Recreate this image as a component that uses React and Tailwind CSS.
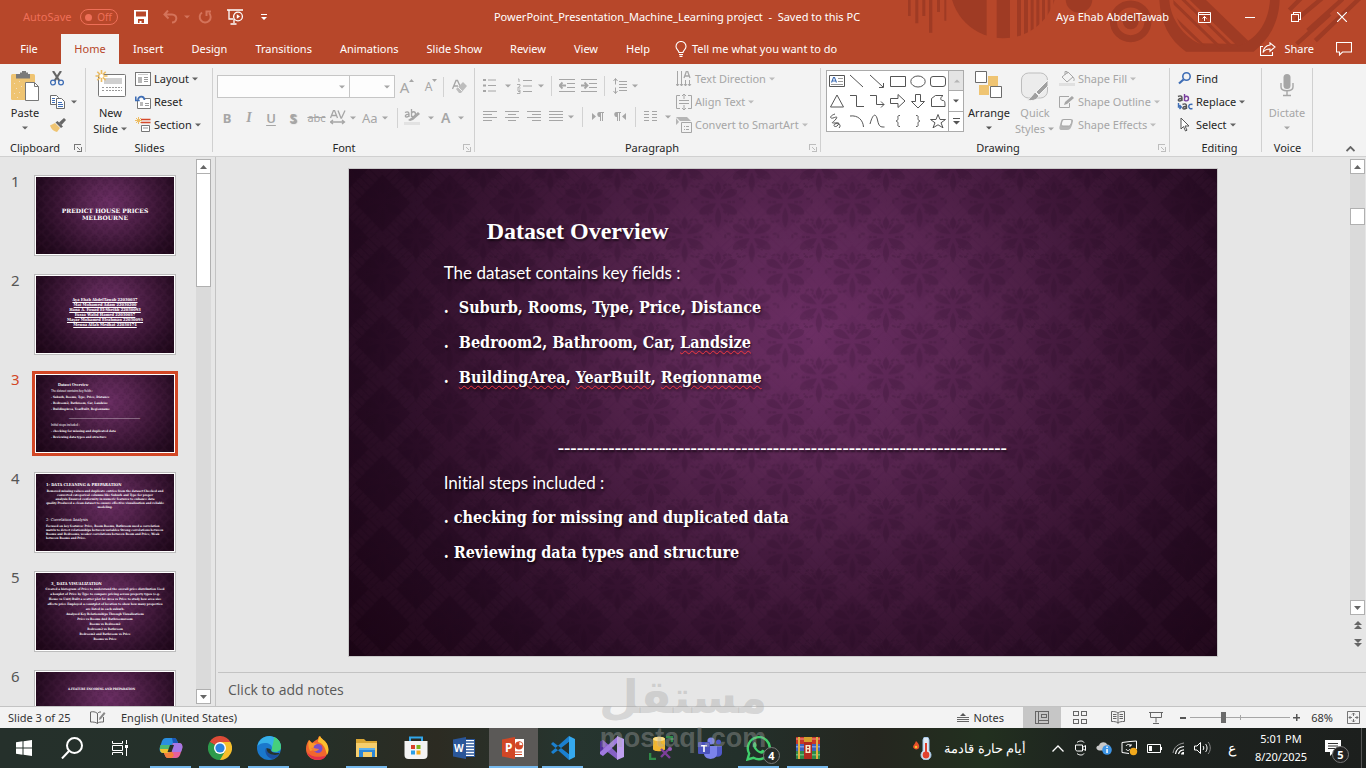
import React, { useId, useState } from "react";
import clsx from "clsx";

/* ---------- small helpers ---------- */

function Svg({ w, h, children, className, ...rest }) {
  return (
    <svg
      width={w}
      height={h}
      viewBox={`0 0 ${w} ${h}`}
      fill="none"
      stroke="currentColor"
      aria-hidden="true"
      className={clsx("shrink-0", className)}
      {...rest}
    >
      {children}
    </svg>
  );
}

function Caret({ className }) {
  return (
    <Svg w={7} h={4} className={className} stroke="none">
      <path d="M0 0.5h6L3 3.5z" fill="currentColor" />
    </Svg>
  );
}

function Sep({ className }) {
  return <span className={clsx("w-px h-5 bg-[#d2d2d2] shrink-0", className)} />;
}

function Launcher() {
  return (
    <Svg w={8} h={8} shapeRendering="crispEdges">
      <path d="M0.5 6V0.5H7M3 3l3 3M7.5 3v4.5H3" />
    </Svg>
  );
}

/* ---------- title bar ---------- */

function HeaderArt() {
  return (
    <svg
      width="460"
      height="52"
      viewBox="0 0 1380 156"
      className="absolute right-0 top-0 pointer-events-none"
      aria-hidden="true"
      fill="#9f3b24"
    >
      <defs>
        <clipPath id="stripeDisc"><circle cx="292" cy="-45" r="160" /></clipPath>
        <clipPath id="ringDisc"><circle cx="948" cy="0" r="146" /></clipPath>
      </defs>
      <path d="M6 0h8v48H6zM28 0h9v70h-9zM49 0h9v48h-9zM69 0h10v98H69zM93 0h9v36h-9zM115 0h6v62h-6z" />
      <g clipPath="url(#stripeDisc)">
        <path d="M130 0h112v160H130zM272 0h40v160h-40zM333 0h12v160h-12zM354 0h12v160h-12zM374 0h9v160h-9zM391 0h9v160h-9zM408 0h9v160h-9zM425 0h8v160h-8zM442 0h7v160h-7z" />
      </g>
      <circle cx="519" cy="-2" r="40" />
      <circle cx="674" cy="64" r="52" fill="none" stroke="#9f3b24" strokeWidth="21" />
      <circle cx="674" cy="64" r="24" />
      <path d="M760 0h30c4 60 44 108 88 130l130 2c50-20 80-70 84-132h29c-2 66-32 120-78 155H840C790 120 764 70 760 0z" />
      <g clipPath="url(#ringDisc)" stroke="#9f3b24" fill="none">
        <path d="M855-20l165 160" strokeWidth="34" />
        <path d="M812-20l165 160M785-10l165 160M770 20l140 135" strokeWidth="9" />
      </g>
      <g stroke="#9f3b24" fill="none" strokeWidth="13">
        <path d="M1150 30l40-40M1170 60l90-75M1205 92l105-95M1228 122l136-130M1172 132l100-90" />
      </g>
    </svg>
  );
}

function TitleBar() {
  return (
    <div className="relative flex items-center h-[34px] text-white">
      <div className="flex items-center w-[298px] pl-[23px] shrink-0">
        <label htmlFor="autosave" className="text-[#ee6f58] w-[57px] whitespace-nowrap">AutoSave</label>
        <button id="autosave" className="flex items-center justify-between w-[38px] h-[16px] rounded-full border border-[#ee6f58] text-[#ee6f58] pl-[4px] pr-[5px] text-[10px] leading-3">
          <span className="w-[7px] h-[7px] rounded-full bg-[#ee6f58]" />
          Off
        </button>
        <button aria-label="Save" className="ml-4">
          <Svg w={14} h={14} stroke="none">
            <path fillRule="evenodd" fill="#fff" d="M0 0h14v14H0zM2 1.500v5h10v-5zM4 9v4h1.500v-2h2v2H10V9z" />
          </Svg>
        </button>
        <button aria-label="Undo" className="ml-[15px] flex items-center gap-[6px] text-[#d4735a]">
          <Svg w={15} h={14} strokeWidth="2">
            <path d="M5 0.500L1.500 4.500 5.500 8.500M2 4.500h7c6 0 5.500 8 0 8" />
          </Svg>
          <Caret />
        </button>
        <button aria-label="Redo" className="ml-[7px] text-[#d4735a]">
          <Svg w={15} h={14} strokeWidth="2">
            <path d="M4 2.500a5.500 5.500 0 1 0 7 0.500M8.500 6V1.500H13" />
          </Svg>
        </button>
        <button aria-label="Start From Beginning" className="ml-[14px]">
          <Svg w={17} h={16} stroke="#fff" strokeWidth="1.3">
            <path d="M0 1h16M2 1v9h4M7 10v4M3.500 15h6" />
            <circle cx="11" cy="7.500" r="4.400" />
            <path d="M9.800 5.300v4.400l3.200-2.200z" fill="#fff" stroke="none" />
          </Svg>
        </button>
        <button aria-label="Customize Quick Access Toolbar" className="ml-[17px]">
          <Svg w={6} h={7} stroke="none">
            <path d="M0 0h6v1H0zM0 3h6L3 6z" fill="#fff" />
          </Svg>
        </button>
      </div>
      <h1 className="flex-1 text-center whitespace-pre">PowerPoint_Presentation_Machine_Learning project  -  Saved to this PC</h1>
      <div className="flex items-center w-[310px] shrink-0">
        <span className="w-[142px] whitespace-nowrap">Aya Ehab AbdelTawab</span>
        <button aria-label="Ribbon Display Options" className="mr-[34px]">
          <Svg w={13} h={11} stroke="#fff">
            <path d="M0.500 0.500h12v10H0.500zM0.500 2.500h12M6.500 9V4.500M4.500 6.500l2-2 2 2" />
          </Svg>
        </button>
        <button aria-label="Minimize" className="mr-[36px]">
          <Svg w={10} h={1} stroke="none"><path d="M0 0h10v1H0z" fill="#fff" /></Svg>
        </button>
        <button aria-label="Restore" className="mr-[36px]">
          <Svg w={10} h={10} stroke="#fff" shapeRendering="crispEdges">
            <path d="M0.500 2.500h7v7h-7zM2.500 2V0.500h7v7H8" />
          </Svg>
        </button>
        <button aria-label="Close">
          <Svg w={10} h={10} stroke="#fff" strokeWidth="1.2"><path d="M0 0l10 10M10 0L0 10" /></Svg>
        </button>
      </div>
    </div>
  );
}

const tabs = ["Insert", "Design", "Transitions", "Animations", "Slide Show", "Review", "View", "Help"];

function TabRow() {
  return (
    <nav className="relative flex items-stretch h-[30px] text-white">
      <button className="w-[61px] pr-[3px]">File</button>
      <button className="w-[58px] bg-[#f3f3f3] text-[#b7472a]">Home</button>
      {tabs.map((t) => (
        <button key={t} className="px-[14px] whitespace-nowrap">{t}</button>
      ))}
      <button className="flex items-center gap-[5px] pl-[11px] whitespace-nowrap">
        <Svg w={12} h={16} stroke="#fff" strokeWidth="1.1">
          <path d="M4 11.500c0-2-3-3-3-6a5 5 0 0 1 10 0c0 3-3 4-3 6zM4 13.500h4M4.500 15.400h3" />
        </Svg>
        Tell me what you want to do
      </button>
      <button className="flex items-center gap-2 ml-auto">
        <Svg w={16} h={14} stroke="#fff" strokeWidth="1.100">
          <path d="M3 4.500H0.500v9h12V10" />
          <path d="M10 0.800l5 4.200-5 4.200V7C6.500 7 4.500 8 3 10.500 3.500 6 6.500 3.500 10 3z" />
        </Svg>
        Share
      </button>
      <button aria-label="Comments" className="ml-[22px] mr-[14px]">
        <Svg w={16} h={14} stroke="#fff" strokeWidth="1.100">
          <path d="M0.500 0.500h15v9.500H6.500L3.500 13v-3h-3z" />
        </Svg>
      </button>
    </nav>
  );
}

/* ---------- ribbon ---------- */

function Group({ label, launcher, dim, className, children }) {
  return (
    <section className={clsx("flex flex-col shrink-0 pt-[3px] relative", className)}>
      <div className="flex h-[73px]">{children}</div>
      <div className="text-center leading-4 text-[#262626]">{label}</div>
      {launcher && (
        <button aria-label={`${label} settings`} className={clsx("absolute right-[4px] bottom-[4px]", dim ? "text-[#bdbdbd]" : "text-[#777]")}>
          <Launcher />
        </button>
      )}
      <span className="absolute right-0 top-1 bottom-1 w-px bg-[#d0d0d0]" />
    </section>
  );
}

function Row({ icon, label, caret = true, gap = "gap-[3px]" }) {
  return (
    <button className={clsx("flex items-center h-[23px] whitespace-nowrap", gap)}>
      <span className="w-4 flex justify-center">{icon}</span>
      {label}
      {caret && <Caret className="opacity-70" />}
    </button>
  );
}

function ClipboardGroup() {
  return (
    <Group label="Clipboard" launcher className="w-[86px] pr-4">
      <button className="w-[50px] shrink-0 flex flex-col items-center pt-1">
        <Svg w={28} h={31} stroke="none">
          <rect x="0" y="3" width="24" height="26" rx="1.500" fill="#efc472" />
          <path d="M5 3h4V1.500h2V0h4v1.500h2V3h2v4.500H5z" fill="#7a7a7a" />
          <path d="M3 12h1v1H3zM8 10h1v1H8zM5 17h1v1H5zM10 15h1v1h-1zM3 22h1v1H3zM8 21h1v1H8zM6 26h1v1H6z" fill="#f4dfc0" />
          <path d="M14.500 11.500h9l4 4v14h-13z" fill="#fff" stroke="#777" />
          <path d="M23.500 11.500v4h4" stroke="#777" fill="none" />
        </Svg>
        <span className="leading-4 mt-[3px]">Paste</span>
        <Caret className="mt-[5px] text-[#666]" />
      </button>
      <div className="flex flex-col">
        <button aria-label="Cut" className="h-[23px] flex items-center">
          <Svg w={14} h={15}>
            <path d="M3 0l6.500 10M11 0L4.500 10" stroke="#666" strokeWidth="2.200" />
            <circle cx="3" cy="11.500" r="2.400" stroke="#3e6db5" strokeWidth="1.300" />
            <circle cx="11" cy="11.500" r="2.400" stroke="#3e6db5" strokeWidth="1.300" />
          </Svg>
        </button>
        <button aria-label="Copy" className="h-[23px] flex items-center gap-[6px] text-[#666]">
          <Svg w={15} h={14} stroke="#6b6b6b">
            <path d="M0.500 0.500h6l2 2v7h-8z" fill="#fff" />
            <path d="M6.500 3.500h5l3 3v7h-8z" fill="#fff" />
            <path d="M2 3.500h3M2 5.500h3M2 7.500h3M8 7.500h4M8 9.500h5M8 11.500h5" stroke="#3e6db5" />
          </Svg>
          <Caret />
        </button>
        <button aria-label="Format Painter" className="h-[23px] flex items-center">
          <Svg w={16} h={14} stroke="none">
            <path d="M0 7.500l5-2.500 5 5-3 4c-3-0.500-6-3-7-6.500z" fill="#efc472" />
            <path d="M5.500 4.500l2-1.500 5.500 5.500-2 1.500z" fill="#666" />
            <path d="M9 4.500L14 0l2 2-4.500 5z" fill="#666" />
          </Svg>
        </button>
      </div>
    </Group>
  );
}

function SlidesGroup() {
  return (
    <Group label="Slides" className="w-[127px]">
      <button className="w-[49px] flex flex-col items-center pt-[3px]">
        <Svg w={31} h={28}>
          <rect x="3.500" y="4.500" width="27" height="22" rx="1" fill="#fff" stroke="#777" />
          <path d="M9 8h18v6H9z" fill="#d0d0d0" stroke="none" />
          <path d="M7 17.500h2M7 20.500h2M11 17.500h16M11 20.500h16" stroke="#999" strokeDasharray="2 1" />
          <path d="M6.500 0v12M0.500 6h12M2.300 1.800l8.400 8.400M10.700 1.800l-8.400 8.400" stroke="#edbd62" strokeWidth="1.600" />
          <circle cx="6.500" cy="6" r="2" fill="#fff" stroke="none" />
        </Svg>
        <span className="leading-4 mt-[7px]">New</span>
        <span className="leading-4 flex items-center gap-[3px]">Slide <Caret className="text-[#666]" /></span>
      </button>
      <div className="flex flex-col">
        <Row label="Layout" icon={
          <Svg w={16} h={14} stroke="#777" shapeRendering="crispEdges">
            <path d="M0.500 0.500h15v13H0.500z" fill="#fff" />
            <path d="M3 2.500h10" stroke="#c9c9c9" />
            <path d="M3 5h4v6H3z" fill="#b9b9b9" stroke="none" />
            <path d="M9 5.500h4M9 7.500h4M9 9.500h4" stroke="#999" />
          </Svg>
        } />
        <Row label="Reset" caret={false} icon={
          <Svg w={16} h={14} stroke="#777">
            <path d="M2.500 4.500v9h13V3.500H9" fill="#fff" />
            <path d="M5 7h3v4H5z" fill="#b9b9b9" stroke="none" />
            <path d="M10 8.500h4M10 10.500h4" stroke="#999" />
            <path d="M9.500 5C9 0.500 4 0.500 3 4.500M0.700 1.500v4h4" stroke="#3e6db5" strokeWidth="1.700" />
          </Svg>
        } />
        <Row label="Section" icon={
          <Svg w={16} h={15} stroke="#777">
            <path d="M6 2.500h9.500M6 5.500h9.500" stroke="#d5492b" strokeWidth="1.400" />
            <path d="M6.500 8.500h8v6h-8z" fill="#fff" />
            <path d="M8 10h5v2H8z" fill="#c9c9c9" stroke="none" />
            <path d="M3.500 0v7M0 3.500h7M1 1l5 5M6 1L1 6" stroke="#edbd62" />
          </Svg>
        } />
      </div>
    </Group>
  );
}

function FontGroup() {
  return (
    <Group label="Font" launcher dim className="w-[262px] px-1 text-[#a6a6a6]">
      <div className="flex flex-col pt-2">
        <div className="flex items-center h-[23px]">
          <div className="relative">
            <select aria-label="Font name" className="appearance-none block w-[133px] h-[23px] bg-[#fdfdfd] border border-[#c6c6c6]"><option></option></select>
            <Caret className="absolute right-1 top-[10px]" />
          </div>
          <div className="relative -ml-px">
            <select aria-label="Font size" className="appearance-none block w-[46px] h-[23px] bg-[#fdfdfd] border border-[#c6c6c6]"><option></option></select>
            <Caret className="absolute right-1 top-[10px]" />
          </div>
          <button aria-label="Increase font size" className="w-[24px] flex justify-center text-[15px] leading-4">
            A<Svg w={5} h={3} stroke="none"><path d="M0 3L2.500 0 5 3z" fill="#a6a6a6" /></Svg>
          </button>
          <button aria-label="Decrease font size" className="w-[24px] flex justify-center text-[12px] leading-4">
            A<Svg w={5} h={3} stroke="none"><path d="M0 0l2.500 3L5 0z" fill="#a6a6a6" /></Svg>
          </button>
          <Sep />
          <button aria-label="Clear formatting" className="ml-2">
            <Svg w={15} h={15} stroke="none">
              <path d="M0.500 10L4 1.500h1.500L8 7M2 7h4" stroke="#a6a6a6" strokeWidth="1.300" />
              <path d="M4 10l7-7 4 4-6 7H7z" fill="#bdbdbd" />
              <path d="M6 8l4 4" stroke="#f3f3f3" />
            </Svg>
          </button>
        </div>
        <div className="flex items-center h-[23px] mt-2 text-[13px]">
          <button className="w-[20px] font-bold">B</button>
          <button className="w-[24px] italic font-['Liberation_Serif',serif] font-bold text-[14px]">I</button>
          <button className="w-[20px] underline underline-offset-2 font-semibold">U</button>
          <button className="w-[24px] font-bold [text-shadow:1px_1px_1px_#999]">S</button>
          <button className="w-[23px] line-through text-[11px]">abc</button>
          <button className="w-[32px] flex items-center gap-1 ml-[2px]" aria-label="Character spacing">
            <Svg w={16} h={15} strokeWidth="1.300">
              <path d="M0.500 8L3.500 0.500h1L7.500 8M2 5.500h4.500M8 0.500L11 8h0.500L15 0.500M0.500 12h14M3 10l-2.500 2L3 14M12 10l2.500 2L12 14" />
            </Svg>
            <Caret />
          </button>
          <button className="w-[32px] flex items-center gap-1">Aa <Caret /></button>
          <Sep className="ml-[3px]" />
          <button className="flex items-center gap-1 ml-[6px]" aria-label="Text highlight colour">
            <Svg w={20} h={17} stroke="none">
              <path d="M1 3.500c3-1.500 4 0 4 1.500v3M5 5.500C1 5 0.500 8 2.500 8c1.500 0 2.500-1 2.500-2.500M7.500 0v8M7.500 5c0-3 4-3 4 0s-4 3.500-4 1" stroke="#a6a6a6" strokeWidth="1.300" />
              <path d="M4 11l3-2 7-6 2 2-7 6-3 1z" fill="#a6a6a6" />
              <path d="M0 13h16v3H0z" fill="#e2e2e2" />
            </Svg>
            <Caret />
          </button>
          <button className="flex items-center gap-2 ml-[6px] text-[14px] font-semibold" aria-label="Font colour">A <Caret /></button>
        </div>
      </div>
    </Group>
  );
}

function Lines({ d, w = 14, h = 12 }) {
  return (
    <Svg w={w} h={h} shapeRendering="crispEdges"><path d={d} /></Svg>
  );
}

function ParagraphGroup() {
  return (
    <Group label="Paragraph" launcher dim className="w-[346px] pl-2 text-[#a6a6a6]">
      <div className="flex flex-col pt-[7px] w-[193px]">
        <div className="flex items-center h-[23px]">
          <button aria-label="Bullets" className="flex items-center gap-2 w-[34px]">
            <Svg w={14} h={15}>
              <path d="M5 2h8M5 7.500h8M5 13h8" />
              <path d="M0 1h3v2H0zM0 6.500h3v2H0zM0 12h3v2H0z" fill="currentColor" stroke="none" />
            </Svg>
            <Caret />
          </button>
          <button aria-label="Numbering" className="flex items-center gap-[6px] w-[34px]">
            <Svg w={15} h={16}>
              <path d="M6 2.500h9M6 8h9M6 13.500h9" />
              <path d="M1 1h1v3M0 6.500h3v1.500l-2.500 2h3M0 12h3v3.500H0M1 13.500h2" strokeWidth="0.900" />
            </Svg>
            <Caret />
          </button>
          <Sep />
          <button aria-label="Decrease list level" className="ml-[7px]">
            <Svg w={16} h={14}>
              <path d="M0 0.500h16M8 4.500h8M8 8.500h8M0 12.500h16" />
              <path d="M1 6.500h6M3.500 3.500l-3 3 3 3" strokeWidth="1.800" />
            </Svg>
          </button>
          <button aria-label="Increase list level" className="ml-[6px] mr-[7px]">
            <Svg w={16} h={14}>
              <path d="M0 0.500h16M8 4.500h8M8 8.500h8M0 12.500h16" />
              <path d="M0 6.500h6M3.500 3.500l3 3-3 3" strokeWidth="1.800" />
            </Svg>
          </button>
          <Sep />
          <button aria-label="Line spacing" className="flex items-center gap-[5px] ml-2">
            <Svg w={14} h={16}>
              <path d="M6 3.500h8M6 6.500h8M6 9.500h8M6 12.500h8M2.500 0.500v6M2.500 9.500v6M0.500 3l2-2.500 2 2.500M0.500 13l2 2.500 2-2.500" />
            </Svg>
            <Caret />
          </button>
        </div>
        <div className="flex items-center h-[23px] mt-2">
          <button aria-label="Align left" className="w-[22px]"><Lines d="M0 0.500h14M0 3.500h9M0 6.500h14M0 9.500h9" /></button>
          <button aria-label="Center" className="w-[22px]"><Lines d="M0 0.500h14M3 3.500h8M0 6.500h14M3 9.500h8" /></button>
          <button aria-label="Align right" className="w-[22px]"><Lines d="M0 0.500h14M5 3.500h9M0 6.500h14M5 9.500h9" /></button>
          <button aria-label="Justify" className="flex items-center gap-[5px] w-[33px]"><Lines d="M0 0.500h14M0 3.500h14M0 6.500h14M0 9.500h14" /><Caret /></button>
          <Sep />
          <button aria-label="Left to right" className="ml-[9px] w-[22px]">
            <Svg w={12} h={9} stroke="none">
              <path d="M0 1l4 3.500L0 8zM7.500 0H12v1h-1v8h-1V1H9v8H8V5a2.500 2.500 0 0 1-0.500-5z" fill="currentColor" />
            </Svg>
          </button>
          <button aria-label="Right to left" className="w-[21px]">
            <Svg w={12} h={9} stroke="none">
              <path d="M12 1L8 4.500 12 8zM2.500 0H7v1H6v8H5V1H4v8H3V5a2.500 2.500 0 0 1-0.500-5z" fill="currentColor" />
            </Svg>
          </button>
          <Sep />
          <button aria-label="Columns" className="flex items-center gap-2 ml-2">
            <Lines w={13} h={12} d="M0 0.500h5M8 0.500h5M0 3.500h5M8 3.500h5M0 6.500h5M8 6.500h5M0 9.500h5M8 9.500h5" />
            <Caret />
          </button>
        </div>
      </div>
      <div className="flex flex-col">
        <Row label="Text Direction" icon={
          <Svg w={16} h={16}>
            <path d="M1.500 0v15M5.500 0v15M9.500 9v6M13.500 9v6M0 13l1.500 2 1.500-2M4 13l1.500 2L7 13M8 13l1.500 2 1.500-2M12 13l1.500 2 1.500-2" />
            <path d="M8 7l2.500-7h1L14 7M9 5h4" strokeWidth="1.300" />
          </Svg>
        } />
        <Row label="Align Text" icon={
          <Svg w={16} h={16}>
            <path d="M4 1.500H0.500v13H4M12 1.500h3.500v13H12M3 6.500h10M3 9.500h10M8 0v5M8 16v-5M6 2l2-2 2 2M6 14l2 2 2-2" />
          </Svg>
        } />
        <Row label="Convert to SmartArt" icon={
          <Svg w={16} h={16}>
            <path d="M0 0h11l4 4H4zM0 1l3 4-3 3z" fill="#b5b5b5" stroke="none" />
            <path d="M5.500 5.500h10v10h-10z" fill="#f3f3f3" />
            <path d="M8 9.500h1M8 12.500h1M10 9.500h3M10 12.500h3" />
          </Svg>
        } />
      </div>
    </Group>
  );
}

/* outlines for the shape gallery, each on a 16px box */
const shapes = [
  <g key="tb"><path d="M0.500 2.500h15v11H0.500z" /><path d="M2.500 9.500L4.500 4.500h1l2 5M3.500 8h3" stroke="#3e6db5" strokeWidth="1.100" /><path d="M9 5.500h5M9 8.500h5M2 11.500h12" stroke="#999" /></g>,
  <path key="ln" d="M1 2l13 12" />,
  <path key="ar" d="M1 2l13 12M14.500 10v4.500H10" />,
  <path key="re" d="M0.500 3.500h15v10H0.500z" />,
  <ellipse key="el" cx="8" cy="8.500" rx="7.200" ry="5.500" />,
  <rect key="rr" x="0.500" y="3.500" width="15" height="10" rx="2.500" />,
  <path key="tr" d="M8 2l6.500 12h-13z" />,
  <path key="co" d="M1 2.500h6.500v11H15" />,
  <path key="ca" d="M1 2.500h6.500v9H15M12 8.500l3 3-3 3" />,
  <path key="ra" d="M0.500 5.500H8v-4l7 6.500-7 6.500v-4H0.500z" />,
  <path key="da" d="M5.500 1.500v7h-4L8 15l6.500-6.500h-4v-7z" />,
  <path key="ff" d="M1.500 13.500V5.500L5.500 2.500H13c-3 2-3 5 0 5 2 0 2 2 2 6z" />,
  <path key="sc" d="M6 1C0 3 1 6 4 5s5-2 3 1-6 4-2 4 6-1 4 2-6 1-3-1 7 1 4 4" />,
  <path key="ac" d="M1 3c8-1 13 4 13.500 11" />,
  <path key="cu" d="M1 11C4 0 7 0 8.500 7s3 7 7 7" />,
  <path key="lb" d="M10 2.500c-3 0-2 1.500-2 3S7 8 6 8c1 0 2 1 2 2.500s-1 3 2 3" />,
  <path key="rb" d="M6 2.500c3 0 2 1.500 2 3S9 8 10 8c-1 0-2 1-2 2.500s1 3-2 3" />,
  <path key="st" d="M8 1.500l2 5h5.500L11 9.800l2 5-5-3-5 3 2-5L0.500 6.500H6z" />,
];

function DrawingGroup() {
  return (
    <Group label="Drawing" launcher dim className="w-[349px] pl-[5px]">
      <div className="flex h-[62px] mt-[3px] bg-white border border-[#ababab]">
        <div className="grid grid-cols-6 w-[121px] text-[#555]">
          {shapes.map((s, i) => (
            <button key={i} aria-label="Shape" className="flex items-center justify-center">
              <Svg w={16} h={16}>{s}</Svg>
            </button>
          ))}
        </div>
        <div className="flex flex-col w-[15px] border-l border-[#ababab] divide-y divide-[#ababab] text-[#555]">
          <button aria-label="Scroll up" className="flex-1 flex items-center justify-center bg-[#e4e4e4] text-[#b5b5b5]"><Caret className="rotate-180" /></button>
          <button aria-label="Scroll down" className="flex-1 flex items-center justify-center"><Caret /></button>
          <button aria-label="More shapes" className="flex-1 flex items-center justify-center">
            <Svg w={7} h={7} stroke="none"><path d="M0 0h7v1H0zM0 3h7L3.500 6.500z" fill="currentColor" /></Svg>
          </button>
        </div>
      </div>
      <button className="w-[50px] flex flex-col items-center pt-1">
        <Svg w={28} h={28}>
          <path d="M4 14h10v10H4zM13 5h10v10H13z" fill="#efc472" stroke="none" />
          <path d="M0.500 0.500h11v11h-11zM15.500 15.500h11v11h-11z" fill="#fff" stroke="#6b6b6b" />
        </Svg>
        <span className="leading-4 mt-[6px]">Arrange</span>
        <Caret className="mt-[5px] text-[#555]" />
      </button>
      <button className="w-[42px] flex flex-col items-center pt-[5px] text-[#a6a6a6]">
        <Svg w={30} h={29}>
          <rect x="1.500" y="1" width="26" height="25" rx="7" fill="#ececec" stroke="#bdbdbd" />
          <path d="M28 8v6l-9 9-3-3z" fill="#a0a0a0" stroke="#f3f3f3" />
          <path d="M15 20l4 4c-3 5-7 5-12 4 3-1 4-3 8-8z" fill="#a0a0a0" stroke="#f3f3f3" />
        </Svg>
        <span className="leading-4 mt-1">Quick</span>
        <span className="leading-4 flex items-center gap-[3px]">Styles <Caret /></span>
      </button>
      <div className="flex flex-col ml-[3px] text-[#a6a6a6]">
        <Row label="Shape Fill" icon={
          <Svg w={16} h={15}>
            <path d="M3 6l6-5 5 5-6 5zM6 4V0.500h2V3M14 6c1.500 2 1.500 3 0.500 4" />
            <path d="M0 12h16v3H0z" fill="#e0e0e0" stroke="none" />
          </Svg>
        } />
        <Row label="Shape Outline" icon={
          <Svg w={16} h={14}>
            <path d="M10 1.500H0.500v11h10V8" />
            <path d="M5 10l1-3 7-6 2 2-7 6z" fill="#a6a6a6" stroke="none" />
          </Svg>
        } />
        <Row label="Shape Effects" icon={
          <Svg w={16} h={13}>
            <path d="M4 1h8c3 0 2 3 1 6s-2 5-5 5H3c-3 0-3-2-2-5s1-6 3-6z" fill="#b5b5b5" stroke="none" />
            <path d="M5 1.500h6c2 0 2 1 1.500 3s-1 3.500-3 3.500H4c-2 0-2-1.500-1.500-3s1-3.500 2.500-3.500z" fill="#f6f6f6" stroke="#a6a6a6" />
          </Svg>
        } />
      </div>
    </Group>
  );
}

function Ribbon() {
  return (
    <div className="flex h-[93px] bg-[#f3f3f3] border-b border-[#d0d0d0] text-[#262626] relative">
      <ClipboardGroup />
      <SlidesGroup />
      <FontGroup />
      <ParagraphGroup />
      <DrawingGroup />
      <Group label="Editing" className="w-[92px] pl-[7px]">
        <div className="flex flex-col">
          <Row label="Find" caret={false} icon={
            <Svg w={14} h={13}>
              <circle cx="8.500" cy="4.500" r="3.700" stroke="#3e6db5" strokeWidth="1.600" />
              <path d="M5.500 7.500L1 11.500" stroke="#3e6db5" strokeWidth="2.200" />
            </Svg>
          } />
          <Row label="Replace" icon={
            <Svg w={16} h={16} strokeWidth="1.400">
              <path d="M1 2.500c3-1.500 4 0 4 1.500v3M5 4.500C1 4 0.500 7 2.500 7c1.500 0 2.500-1 2.500-2.500" stroke="#555" />
              <path d="M7.500 0v7M7.500 4.500c0-3 4-3 4 0s-4 3-4 1" stroke="#7a3fa0" />
              <path d="M5.500 10.500c3-1.500 4 0 4 1.500v3M9.500 12.500c-4-0.500-4.500 2.500-2.500 2.500 1.500 0 2.500-1 2.500-2.500" stroke="#555" />
              <path d="M15.500 10.500c-5-1.500-5 5.500 0 4M1.500 9v4H4M2.500 11l1.800 2-1.800 2" stroke="#3e6db5" />
            </Svg>
          } />
          <Row label="Select" icon={
            <Svg w={10} h={15} stroke="#555"><path d="M1 1v11l2.500-2.500 2 4.500 1.500-0.800-2-4.200H9z" fill="#fff" /></Svg>
          } />
        </div>
      </Group>
      <Group label="Voice" className="w-[51px]">
        <button className="w-[50px] flex flex-col items-center pt-[7px] text-[#a6a6a6]">
          <Svg w={14} h={23} stroke="none">
            <rect x="3.500" y="0" width="7" height="15" rx="3.500" fill="#a6a6a6" />
            <path d="M1 9v4c0 5 12 5 12 0V9M7 17v4.500M3 21.500h8" stroke="#a6a6a6" strokeWidth="1.400" />
          </Svg>
          <span className="leading-4 mt-2">Dictate</span>
          <Caret className="mt-[5px]" />
        </button>
      </Group>
      <button aria-label="Collapse the Ribbon" className="ml-auto self-end mr-[11px] mb-1 text-[#666]">
        <Svg w={9} h={6} strokeWidth="1.800"><path d="M0.500 5l4-4 4 4" /></Svg>
      </button>
    </div>
  );
}

/* ---------- slide ---------- */

function Motif({ x, y }) {
  return (
    <g transform={`translate(${x} ${y})`}>
      <path d="M0-22c4 5 4 9 0 14c-4-5-4-9 0-14zM2-4c7-11 12-12 17-9c1 6-8 9-17 9zM-2-4c-7-11-12-12-17-9c-1 6 8 9 17 9zM2 0c12 0 18 6 17 11c-7 2-14-2-17-11zM-2 0c-12 0-18 6-17 11c7 2 14-2 17-11zM0 4c4 7 4 15 0 21c-4-6-4-14 0-21z" />
      <path d="M5-17c5-4 9-1 8 2M-5-17c-5-4-9-1-8 2M21-4c5-2 7 2 4 5M-21-4c-5-2-7 2-4 5M6 17c5 4 10 1 8-2M-6 17c-5 4-10 1-8-2M3-10l4-6M-3-10l-4-6M5 8l6 4M-5 8l-6 4M9-1h8M-9-1h-8" fill="none" stroke="#1a0418" strokeWidth="2.200" strokeDasharray="4 1" />
    </g>
  );
}

function SlideSurface({ className, children }) {
  const id = useId();
  return (
    <div className={clsx("relative bg-[radial-gradient(ellipse_58%_92%_at_53%_34%,#682c61_0%,#572450_28%,#3b1535_60%,#240a20_88%,#170210_125%)]", className)}>
      <svg viewBox="0 0 867 488" preserveAspectRatio="xMidYMid slice" className="absolute inset-0 w-full h-full" aria-hidden="true">
        <defs>
          <pattern id={id} width="67" height="70" patternUnits="userSpaceOnUse">
            <path d="M33.500-4L71 35L33.500 74L-4 35z" fill="none" stroke="#a860a0" strokeOpacity="0.040" strokeWidth="14" strokeDasharray="5 1" />
            <g fill="#1a0418" opacity="0.150">
              <Motif x={0} y={0} />
              <Motif x={67} y={0} />
              <Motif x={0} y={70} />
              <Motif x={67} y={70} />
              <Motif x={33.500} y={35} />
            </g>
          </pattern>
        </defs>
        <rect width="867" height="488" fill={`url(#${id})`} />
      </svg>
      <div className="relative h-full">{children}</div>
    </div>
  );
}

const squiggle = "underline decoration-wavy decoration-1 decoration-[#f0383e] underline-offset-2";

function CurrentSlide() {
  return (
    <SlideSurface className="h-full aspect-[867/487] border border-[#c8c8c8] text-white overflow-hidden">
      <div className="pl-[95px] pt-[46px] [text-shadow:1px_2px_2px_rgba(0,0,0,0.6)] [font-variant-ligatures:none]">
        <h2 className="pl-[43px] font-['Liberation_Serif',serif] font-bold text-[24px] leading-8">Dataset Overview</h2>
        <div className="mt-2 text-[16px] leading-[35px] whitespace-pre font-['DejaVu_Serif_Condensed','DejaVu_Serif',serif] font-bold">
          <p className="font-['Lato',sans-serif] font-normal text-[17px]">The dataset contains key fields :</p>
          <p>.  Suburb, Rooms, Type, Price, Distance</p>
          <p>.  Bedroom2, Bathroom, Car, <span className={squiggle}>Landsize</span></p>
          <p>.  <span className={squiggle}>BuildingArea</span>, <span className={squiggle}>YearBuilt</span>, <span className={squiggle}>Regionname</span></p>
          <p className="pt-[35px] pl-[114px] font-['Liberation_Serif',serif] text-[19px]">{"-".repeat(71)}</p>
          <p className="font-['Lato',sans-serif] font-normal text-[17px]">Initial steps included :</p>
          <p>. checking for missing and duplicated data</p>
          <p>. Reviewing data types and structure</p>
        </div>
      </div>
    </SlideSurface>
  );
}

const tiny = "font-['DejaVu_Serif_Condensed','DejaVu_Serif',serif] font-bold";

const thumbs = [
  <div key="1" className="pt-[30px] text-center text-[6px] leading-[7px] font-['DejaVu_Serif',serif] font-bold">
    PREDICT HOUSE PRICES<br />MELBOURNE
  </div>,
  <div key="2" className={clsx("pt-[21px] text-center text-[4px] leading-[5px] underline", tiny)}>
    Aya Ehab AbdelTawab 22030037<br />
    Mai Mohamed Adam 22030200<br />
    Hana A. Fouad El-Sheikh 22030093<br />
    Esraa Walid Hamed 22030057<br />
    Mayar Mohamed Elrahman 22030095<br />
    Menna Allah Medhat 22030174
  </div>,
  <div key="3" className={clsx("pl-[15px] pt-[7px] text-[3px] leading-[6px] whitespace-pre", tiny)}>
    <p className="pl-[7px] text-[4px] font-['Liberation_Serif',serif]">Dataset Overview</p>
    <p className="font-['Lato',sans-serif] font-normal">The dataset contains key fields :</p>
    <p>. Suburb, Rooms, Type, Price, Distance</p>
    <p>. Bedroom2, Bathroom, Car, Landsize</p>
    <p>. BuildingArea, YearBuilt, Regionname</p>
    <p className="pt-1 pl-[18px] font-['Liberation_Serif',serif]">{"-".repeat(71)}</p>
    <p className="font-['Lato',sans-serif] font-normal">Initial steps included :</p>
    <p>. checking for missing and duplicated data</p>
    <p>. Reviewing data types and structure</p>
  </div>,
  <div key="4" className={clsx("px-[10px] pt-[8px] text-[3px] leading-1", tiny)}>
    <p className="text-[4px] leading-[5px]">1- DATA CLEANING &amp; PREPARATION</p>
    <p className="text-center mt-[2px]">
      Removed missing values and duplicate entries from the dataset Checked and<br />
      converted categorical columns like Suburb and Type for proper<br />
      analysis Ensured conformity in numeric features to enhance data<br />
      quality Produced a clean dataset to ensure effective visualization and reliable<br />
      modeling.
    </p>
    <p className="text-[4px] leading-[5px] mt-[8px] font-normal">2- Correlation Analysis</p>
    <p className="mt-[2px]">
      Focused on key features: Price, Room Rooms, Bathroom used a correlation<br />
      matrix to detect relationships between variables Strong correlations between<br />
      Rooms and Bedrooms, weaker correlations between Room and Price, Weak<br />
      between Rooms and Price.
    </p>
  </div>,
  <div key="5" className={clsx("px-[2px] pt-[8px] text-center text-[3px] leading-[5px]", tiny)}>
    <p className="text-[4px] text-left pl-[13px]">3_ DATA VISUALIZATION</p>
    <p className="mt-px leading-[5px]">
      Created a histogram of Price to understand the overall price distribution Used<br />
      a boxplot of Price by Type to compare pricing across property types (e.g.<br />
      House vs Unit) Built a scatter plot for Area vs Price to study how area size<br />
      affects price Employed a countplot of location to show how many properties<br />
      are listed in each suburb.
    </p>
    <p>Analyzed Key Relationships Through Visualizations</p>
    <p>Price vs Rooms And Bathroomsroom</p>
    <p>Rooms vs Bedroom2</p>
    <p>Bedroom2 vs Bathroom</p>
    <p>Bedroom2 and Bathroom vs Price</p>
    <p>Rooms vs Price</p>
  </div>,
  <div key="6" className={clsx("pt-[14px] pl-8 text-[3px] leading-[6px]", tiny)}>
    4-FEATURE  ENCODING AND PREPARATION
  </div>,
];

function ScrollButton({ label, up, className }) {
  return (
    <button aria-label={label} className={clsx("flex items-center justify-center w-[15px] h-[15px] shrink-0 bg-white border border-[#b0b0b0] text-[#666]", className)}>
      <Svg w={7} h={4} stroke="none" className={up ? "rotate-180" : ""}><path d="M0 0h7L3.500 4z" fill="currentColor" /></Svg>
    </button>
  );
}

function ThumbnailPane() {
  const [current, setCurrent] = useState(3);
  return (
    <aside className="flex w-[216px] shrink-0 border-r border-[#c3c3c3] min-h-0 pt-[2px]">
      <ol className="flex-1 pl-2 pt-[14px] overflow-hidden">
        {thumbs.map((t, i) => {
          const active = current === i + 1;
          return (
            <li key={i} className="flex items-start h-[99px]">
              <span className={clsx("w-[24px] pl-[3px] text-[15px] leading-4", active ? "text-[#d24726]" : "text-[#555]")}>{i + 1}</span>
              <button
                aria-label={`Slide ${i + 1}`}
                onClick={() => setCurrent(i + 1)}
                className={clsx("w-[146px] h-[85px] text-left border-[3px]", active ? "border-[#d24726]" : "border-transparent")}
              >
                <SlideSurface className={clsx("w-full h-full border border-white text-white overflow-hidden", !active && "outline-1 outline-[#bcbcbc]")}>
                  {t}
                </SlideSurface>
              </button>
            </li>
          );
        })}
      </ol>
      <div className="flex flex-col w-[15px] mr-1 mb-[2px] bg-[#dadada]">
        <ScrollButton up label="Scroll slides up" />
        <div className="h-[114px] -mt-px bg-white border border-[#b0b0b0]" />
        <ScrollButton label="Scroll slides down" className="mt-auto" />
      </div>
    </aside>
  );
}

function Editor() {
  return (
    <main className="flex-1 flex flex-col min-w-0 min-h-0">
      <div className="flex-1 flex min-h-0">
        <div className="flex-1 min-w-0 flex justify-center pt-[11px] pb-[15px]">
          <CurrentSlide />
        </div>
        <div className="flex flex-col items-center w-[15px] mr-px pt-[2px] pb-[25px]">
          <ScrollButton up label="Scroll up" />
          <div className="flex-1 w-full bg-[#dadada] pt-[34px]">
            <div className="h-[17px] bg-white border border-[#b0b0b0]" />
          </div>
          <ScrollButton label="Scroll down" />
          <button aria-label="Previous slide" className="mt-[6px] text-[#666]">
            <Svg w={8} h={8} stroke="none"><path d="M0 4l4-4 4 4zM0 8l4-4 4 4z" fill="currentColor" /></Svg>
          </button>
          <button aria-label="Next slide" className="mt-[10px] text-[#666]">
            <Svg w={8} h={8} stroke="none"><path d="M0 0l4 4 4-4zM0 4l4 4 4-4z" fill="currentColor" /></Svg>
          </button>
        </div>
      </div>
      <div className="h-[34px] ml-[2px] border-t border-[#c3c3c3] flex items-center">
        <input
          aria-label="Notes"
          placeholder="Click to add notes"
          className="w-full pl-[10px] bg-transparent outline-none text-[14px] font-['Open_Sans',sans-serif] placeholder:text-[#595959]"
        />
      </div>
    </main>
  );
}

/* ---------- status bar ---------- */

function StatusBar() {
  const [zoom, setZoom] = useState(33);
  return (
    <div className="flex items-center h-[22px] bg-[#f3f3f3] border-t border-[#c3c3c3] text-[#333] shrink-0">
      <span className="w-[82px] pl-2 whitespace-nowrap">Slide 3 of 25</span>
      <button aria-label="Spelling" className="ml-2">
        <Svg w={16} h={13} stroke="#666">
          <path d="M7.500 2.500v10M7.500 2.500C5 0.500 3 0.500 0.500 1v10c2.500 0 5 0 7 1.500M7.500 2.500C8.500 1 9.500 1 11 1M13.500 6v5c-3 0-5 0-6 1.500" />
          <path d="M9 9l0.500-2.500L14 1l1.500 1.500L11 8z" fill="#888" stroke="none" />
        </Svg>
      </button>
      <button className="ml-[15px] whitespace-nowrap">English (United States)</button>
      <div className="ml-auto flex items-center h-full">
        <button className="flex items-center gap-[5px] mr-[19px]">
          <Svg w={12} h={11} stroke="#555">
            <path d="M0 5.500h12M0 7.500h12M0 9.500h12" strokeWidth="0.900" />
            <path d="M3 4l3-3 3 3z" fill="#555" stroke="none" />
          </Svg>
          Notes
        </button>
        <button aria-label="Normal" className="w-[38px] h-full flex items-center justify-center bg-[#c6c6c6]">
          <Svg w={14} h={13} stroke="#666" shapeRendering="crispEdges"><path d="M0.500 0.500h13v12H0.500zM3.500 0.500v12M3.500 9.500h10M6.500 3.500h5v3h-5z" /></Svg>
        </button>
        <button aria-label="Slide Sorter" className="w-[38px] h-full flex items-center justify-center">
          <Svg w={14} h={13} stroke="#666" shapeRendering="crispEdges"><path d="M0.500 0.500h5v4h-5zM8.500 0.500h5v4h-5zM0.500 8.500h5v4h-5zM8.500 8.500h5v4h-5z" /></Svg>
        </button>
        <button aria-label="Reading View" className="w-[38px] h-full flex items-center justify-center">
          <Svg w={14} h={13} stroke="#666"><path d="M7 2v10.500M7 2C5 0.500 3 0.500 0.500 0.500v10c3 0 4.500 0 6.500 1.500 2-1.500 3.500-1.500 6.500-1.500v-10C11 0.500 9 0.500 7 2zM2 3.500h3.500M2 5.500h3.500M2 7.500h3.500M8.500 3.500H12M8.500 5.500H12M8.500 7.500H12" /></Svg>
        </button>
        <button aria-label="Slide Show" className="w-[38px] h-full flex items-center justify-center">
          <Svg w={14} h={12} stroke="#666"><path d="M0 0.500h14M1.500 0.500v5h11v-5M7 5.500v5M4 11.500h6" /></Svg>
        </button>
        <button aria-label="Zoom out" className="ml-[5px]"><Svg w={6} h={2} stroke="none"><path d="M0 0h6v2H0z" fill="#555" /></Svg></button>
        <span className="relative ml-1 flex items-center">
          <input
            type="range"
            aria-label="Zoom"
            value={zoom}
            onChange={(e) => setZoom(Number(e.target.value))}
            className="appearance-none w-[100px] h-[11px] bg-[linear-gradient(#a6a6a6,#a6a6a6)] bg-[length:100%_1px] bg-center bg-no-repeat [&::-webkit-slider-thumb]:appearance-none [&::-webkit-slider-thumb]:w-[5px] [&::-webkit-slider-thumb]:h-[11px] [&::-webkit-slider-thumb]:bg-[#6b6b6b]"
          />
          <span className="absolute left-1/2 w-px h-[5px] bg-[#a6a6a6]" />
        </span>
        <button aria-label="Zoom in" className="ml-[3px]"><Svg w={7} h={7} stroke="none"><path d="M0 3h3V0h1.500v3H7v1.500H4.500V7H3V4.500H0z" fill="#555" /></Svg></button>
        <button className="w-[22px] ml-[11px] mr-[14px]">{35 + zoom}%</button>
        <button aria-label="Fit slide to window" className="mr-[6px]">
          <Svg w={13} h={13} stroke="#666"><path d="M0.500 0.500h12v12H0.500zM6.500 2v3M5 3.500l1.500-1.500L8 3.500M6.500 11V8M5 9.500L6.500 11 8 9.500M2 6.500h3M3.500 5L2 6.500 3.500 8M11 6.500H8M9.500 5L11 6.500 9.500 8" strokeWidth="0.900" /></Svg>
        </button>
      </div>
    </div>
  );
}

/* ---------- taskbar ---------- */

const apps = [
  { name: "Copilot", open: true, icon: (
    <Svg w={24} h={22} stroke="none">
      <path d="M7 1h8c2 0 3 2 4 5h-3c-2 0-3 1-4 4l-2 6H4C1 16 0 13 1 10l2-6c1-2 2-3 4-3z" fill="#2a8fe0" />
      <path d="M1.500 8h11l-2 8H4C1 16 0 12 1.500 8z" fill="#4fb870" />
      <path d="M1 12h10l-1.500 4H4c-2 0-3-2-3-4z" fill="#f0c030" />
      <path d="M17 21H9c-2 0-3-2-4-5h3c2 0 3-1 4-4l2-6h6c3 0 4 3 3 6l-2 6c-1 2-2 3-4 3z" fill="#e8609a" />
      <path d="M14 6h6c3 0 4 3 3 6l-1 3H11z" fill="#a578e6" />
      <path d="M5 16h3c2 0 3-1 4-3l3 5-2 3H9c-2 0-3-2-4-5z" fill="#f2803a" />
      <path d="M11 8h4l-2.500 7H8.500z" fill="#243029" />
      <path d="M13 1h2c2 0 3 2 4 5h-5z" fill="#1a57b8" />
    </Svg>
  ) },
  { name: "Chrome", open: true, icon: (
    <Svg w={24} h={24} stroke="none">
      <path d="M12 12L1.600 6A12 12 0 0 1 22.400 6z" fill="#dd4b37" />
      <path d="M12 12V6h10.400A12 12 0 0 1 12 24z" fill="#f6bf2c" />
      <path d="M12 12l5.200 3L12 24A12 12 0 0 1 1.600 6z" fill="#2d9a4b" />
      <path d="M1.600 6L6.800 15 12 12z" fill="#2d9a4b" />
      <circle cx="12" cy="12" r="6" fill="#fff" />
      <circle cx="12" cy="12" r="4.600" fill="#2a83e0" />
    </Svg>
  ) },
  { name: "Edge", open: true, icon: (
    <Svg w={24} h={24} stroke="none">
      <circle cx="12" cy="12" r="12" fill="#1a78cc" />
      <path d="M0.500 10C2 3 8-0.500 14 0.200S24 6 24 11c0 4-4 5.500-8 4.500-2-0.500-1-2-1-3.500 0-3-3-5-7-5-3 0-6 1-7.500 3z" fill="#36b0e8" />
      <path d="M17 1c5 2 7 6 7 10 0 4-4 5.500-8 4.500-2-0.500-1-2-1-3.500 0-2 2-6 2-11z" fill="#46cf7c" />
      <path d="M9 12c-2 4 1 10 7 11 3-1 5-3 6-5-5 2-12 1-13-6z" fill="#1c4fa0" />
      <path d="M9.500 12c-0.500 5 5 8 12 6.500l1-1.500c-4 0-9 0-9-4z" fill="#26322d" />
    </Svg>
  ) },
  { name: "Firefox", icon: (
    <Svg w={23} h={24} stroke="none">
      <path d="M3 4l3 3c2-1 3-3 6-4 0-2 1-3 2-3 1 3 5 4 7 8 4 8-2 16-9.500 16S0 18.500 0 13c0-4 1-6 3-9z" fill="#f2662e" />
      <path d="M14 0c1 3 5 4 7 8 2 4 2 8 0 11-2-9-4-11-9-13 0-3 1-5 2-6z" fill="#fbc02d" />
      <path d="M1 16c3 4 8 6 19 4-2 3-5 4-8.500 4C6 24 2 20 1 16z" fill="#e4314b" />
      <path d="M3 4l3 3 6 1-3 3 2 2-7 2c-2-4-2-8-1-11z" fill="#fb9a2b" />
      <circle cx="12" cy="12.500" r="4.500" fill="#7a4fc8" />
      <path d="M5 12c3-1 5 1 8 1-2 3-6 3-8-1z" fill="#f2803a" />
    </Svg>
  ) },
  { name: "File Explorer", open: true, icon: (
    <Svg w={22} h={20} stroke="none">
      <path d="M0 1h8l2 2h11v6H0z" fill="#d9a634" />
      <path d="M0 5h21v14H0z" fill="#f6ce6d" />
      <path d="M3 10h16v9h-3v-5h-9v5H3z" fill="#2c86d6" />
      <path d="M3 10h16v2H3z" fill="#5cb0ee" />
    </Svg>
  ) },
  { name: "Microsoft Store", icon: (
    <Svg w={24} h={24} stroke="none">
      <path d="M6 6V1.500h12V6" stroke="#31a6ea" strokeWidth="2" />
      <path d="M0.500 5h23v14a4 4 0 0 1-4 4h-15a4 4 0 0 1-4-4z" fill="#f4f4f4" />
      <path d="M7 9h4v4H7z" fill="#d8402a" /><path d="M12.500 9h4v4h-4z" fill="#7fb51c" />
      <path d="M7 14.500h4v4H7z" fill="#2a9fe8" /><path d="M12.500 14.500h4v4h-4z" fill="#f2a91c" />
    </Svg>
  ) },
  { name: "Word", icon: (
    <Svg w={23} h={22} stroke="none">
      <path d="M11 2h11v18H11z" fill="#fff" />
      <path d="M13 5h8M13 8h8M13 11h8M13 14h8M13 17h8" stroke="#2a5699" strokeWidth="1.400" />
      <path d="M22 2v18H11v-1h10V3H11V2z" fill="#2a5699" />
      <path d="M0 2.500L13 0v22L0 19.500z" fill="#2a5699" />
      <text x="1" y="15" fontSize="10" fontWeight="bold" fill="#fff">W</text>
    </Svg>
  ) },
  { name: "PowerPoint", active: true, icon: (
    <Svg w={23} h={22} stroke="none">
      <path d="M11 2h11v18H11z" fill="#fff" />
      <path d="M13 15h7M13 17.500h7" stroke="#d24726" strokeWidth="1.200" />
      <circle cx="17" cy="8.500" r="4" fill="#d24726" />
      <path d="M17 8.500V4.500a4 4 0 0 1 4 4z" fill="#fff" stroke="#d24726" strokeWidth="0.800" />
      <path d="M0 2.500L13 0v22L0 19.500z" fill="#d24726" />
      <text x="3" y="15" fontSize="12" fontWeight="bold" fill="#fff">P</text>
    </Svg>
  ) },
  { name: "Visual Studio Code", open: true, icon: (
    <Svg w={24} h={24} stroke="none">
      <path d="M0 8l2-2 16 12v6zM0 16l2 2L18 6V0z" fill="#1b80cf" />
      <path d="M18 0l6 3v18l-6 3V0z" fill="#35a9ee" />
      <path d="M18 6v12l-7-6z" fill="#26322d" />
    </Svg>
  ) },
  { name: "Visual Studio", icon: (
    <Svg w={24} h={24} stroke="none">
      <path d="M0 6l3-2 15 13v7L3 12.500 0 15z" fill="#8661c5" />
      <path d="M0 6l3-2v16l-3-2z" fill="#52309b" />
      <path d="M0 18l3 2L18 7V0L0 16z" fill="#a07ae0" />
      <path d="M17 0l7 3v18l-7 3z" fill="#c0a0f0" />
      <path d="M17 7v10l-5-5z" fill="#26322d" />
    </Svg>
  ) },
  { name: "SQL Server Management Studio", icon: (
    <Svg w={24} h={24} stroke="none">
      <path d="M4 3c0-3 12-3 12 0v10c0 3-12 3-12 0z" fill="#f2b632" />
      <ellipse cx="10" cy="3" rx="6" ry="2.200" fill="#fbe08a" />
      <path d="M17 1h6v5M1 17v6h6" stroke="#2f8a48" strokeWidth="2.600" />
      <path d="M12 13l9 9M21 12l-9 9" stroke="#7d3f9a" strokeWidth="2.400" />
      <circle cx="21" cy="13" r="2" fill="#9a5ab8" />
    </Svg>
  ) },
  { name: "Teams", icon: (
    <Svg w={24} h={22} stroke="none">
      <circle cx="13" cy="4" r="3.600" fill="#7b83eb" />
      <circle cx="20.500" cy="5" r="2.500" fill="#5059c9" />
      <path d="M15 9h9v7c0 4-6 5-8 2z" fill="#5059c9" />
      <path d="M6 9h13v8c0 6-12 7-13 0z" fill="#7b83eb" />
      <rect x="0" y="5" width="12" height="12" rx="1" fill="#4b53bc" />
      <path d="M3 8h6v1.500H6.800V15H5.200V9.500H3z" fill="#fff" />
    </Svg>
  ) },
  { name: "WhatsApp", open: true, badge: 4, icon: (
    <Svg w={25} h={25} stroke="none">
      <path d="M1.500 23.500l1.700-6A11 11 0 1 1 7.500 21.800z" stroke="#3fcf6b" strokeWidth="2.400" />
      <path d="M8 6.500c1-1 2 0 2.500 2s-1 2 0 3.500 2 2.500 3.500 3 1.500-2 3-1.200 2.500 1.200 1.500 2.500c-2 2.500-5 1.500-8-1s-5-6.500-2.500-8.800z" fill="#3fcf6b" />
    </Svg>
  ) },
  { name: "WinRAR", open: true, icon: (
    <Svg w={24} h={22} stroke="none">
      <path d="M0 0h24v7H0z" fill="#c8372b" /><path d="M0 1h24v2H0z" fill="#e2685a" />
      <path d="M0 7h24v7H0z" fill="#3b62c0" /><path d="M0 9h24v1.500H0z" fill="#7b9ae0" />
      <path d="M0 14h24v8H0z" fill="#2f8a48" /><path d="M0 17h24v1.500H0z" fill="#6ab87c" />
      <path d="M2 0h2v22H2zM20 0h2v22h-2z" fill="#e0b040" />
      <path d="M8 0h8v22H8z" fill="#d4a02c" />
      <path d="M8 5h8v17H8z" fill="#b02a20" />
      <path d="M9.500 8h5v8h-5zM11 9.500v1.500h2V9.500zM11 12.500v2h2v-2z" fill="#f4e6c8" fillRule="evenodd" />
    </Svg>
  ) },
];

function TaskButton({ app }) {
  return (
    <button aria-label={app.name} className={clsx("relative w-[49px] h-full flex items-center justify-center shrink-0", app.active && "bg-[#5b5957]")}>
      {app.icon}
      {app.badge && (
        <span className="absolute right-[3px] bottom-[4px] w-[17px] h-[17px] rounded-full border border-[#777] bg-[#262b28] text-white text-[11px] leading-[15px] font-bold">{app.badge}</span>
      )}
      {(app.open || app.active) && (
        <span className={clsx("absolute bottom-0 h-[2px] bg-[#76b9ed]", app.active ? "inset-x-0" : "inset-x-1")} />
      )}
    </button>
  );
}

function Taskbar() {
  return (
    <footer className="flex items-center h-10 shrink-0 text-white bg-[linear-gradient(90deg,#25302b_0%,#243029_22%,#2c2b22_32%,#26352f_42%,#23302b_54%,#25261f_64%,#22301f_72%,#1e2420_79%,#1c1f1d_100%)]">
      <button aria-label="Start" className="w-[48px] flex justify-center">
        <Svg w={16} h={16} stroke="none"><path d="M0 2.200l6.500-0.900v6.200H0zM7.500 1.200L16 0v7.500H7.500zM0 8.500h6.500v6.200L0 13.800zM7.500 8.500H16V16l-8.500-1.200z" fill="#fff" /></Svg>
      </button>
      <button aria-label="Search" className="w-[48px] flex justify-center">
        <Svg w={22} h={22} stroke="#fff" strokeWidth="2"><circle cx="13.500" cy="8.500" r="7.500" /><path d="M8 14l-7 7.500" /></Svg>
      </button>
      <button aria-label="Task View" className="w-[48px] flex justify-center">
        <Svg w={16} h={16} stroke="#fff"><path d="M0.500 1v2.500h10V1M0.500 15v-2.500h10V15M0.500 5.500h10v5H0.500zM14.500 0v4M14.500 8v8" /><path d="M13 5h3v3h-3z" fill="#fff" stroke="none" /></Svg>
      </button>
      <div className="flex h-full ml-[2px]">
        {apps.map((a) => <TaskButton key={a.name} app={a} />)}
      </div>
      <div className="ml-auto flex items-center h-full">
        <button className="flex items-center gap-3 whitespace-nowrap text-[13px]">
          <Svg w={19} h={23} stroke="none">
            <path d="M3 4c2 2 4 4 3 7-1 2-5 2-6-1 0-2 2-3 3-6z" fill="#e8502a" />
            <circle cx="3" cy="10" r="1.300" fill="#fbc02d" />
            <path d="M10 3a3 3 0 0 1 6 0v11a5 5 0 1 1-6 0z" fill="#dfe9f4" stroke="#9fc4e6" />
            <circle cx="13" cy="18" r="3.400" fill="#e0402e" />
            <path d="M12 6h2v11h-2z" fill="#e0402e" />
          </Svg>
          <span dir="rtl" lang="ar">أيام حارة قادمة</span>
        </button>
        <div className="flex items-center gap-[9px] ml-[26px]">
          <Svg w={12} h={7} stroke="#fff" strokeWidth="1.300"><path d="M0.500 6.500L6 1l5.500 5.500" /></Svg>
          <span className="w-[14px] flex justify-end">
            <Svg w={12} h={16} stroke="#fff">
              <path d="M2 2.500C4 0.500 8 0.500 9 2.500M2 13.500c2 2 6 2 7 0M0.500 5h7v6h-5c-1 0-2-0.500-2-2zM7.500 7.500l3-2v5l-3-2" />
            </Svg>
          </span>
          <Svg w={16} h={14} stroke="none">
            <path d="M3 9.500c-4-1-3-5 0-5 1-4 7-4 8-1 4 0 4 5 2 6z" fill="#c9c9c9" />
            <circle cx="11" cy="9" r="4.800" fill="#3d95e6" />
            <path d="M10.300 8h1.500v4h-1.500zM10.300 5.500h1.500v1.400h-1.500z" fill="#fff" />
          </Svg>
          <Svg w={17} h={16} stroke="#fff">
            <path d="M9 1.500L1 2.500v10l7 1M9 1.500l6.500-0.500v8M5 6c1-2 4-2 5 0M10 4v2H8M5 9c1 2 3 2 4 0" />
            <circle cx="12.500" cy="11.500" r="3.700" fill="#f2a91c" stroke="none" />
          </Svg>
          <Svg w={16} h={9} stroke="#fff"><path d="M0.500 0.500h13v8h-13zM14.500 3v3" /><path d="M2 2h3v5H2z" fill="#fff" stroke="none" /></Svg>
          <Svg w={13} h={13} stroke="#fff">
            <path d="M1 11C2 5 6 2 12 1" stroke="#999" /><path d="M3.500 12C4 8 7 5 12 4.500M6.500 12C7 10 9 8 12 7.800" strokeWidth="1.200" />
            <path d="M9 12.500c0-2 1.500-2.500 3-2.500v2.500z" fill="#fff" stroke="none" />
          </Svg>
          <Svg w={17} h={14} stroke="#fff"><path d="M0.500 5h2.500L6.500 1.500v11L3 9H0.500zM9 5c1 1 1 3 0 4M11.500 3c2 2 2 6 0 8" /><path d="M14 1c3 3 3 9 0 12" stroke="#888" /></Svg>
        </div>
        <button lang="ar" aria-label="Input language" className="w-[41px] text-center text-[14px]">ع</button>
        <button className="w-[58px] text-center leading-[18px] whitespace-nowrap"><span className="block">5:01 PM</span><span className="block">8/20/2025</span></button>
        <button aria-label="Notifications" className="relative ml-[15px] mr-3 w-[24px] h-[24px]">
          <Svg w={16} h={16} stroke="none"><path d="M0 0h16v12H9l-4 4v-4H0z" fill="#fff" /><path d="M3 3.500h10M3 6h10M3 8.500h7" stroke="#333" /></Svg>
          <span className="absolute right-0 -bottom-[3px] w-[17px] h-[17px] rounded-full border border-[#777] bg-[#222] text-[11px] leading-[15px] font-bold">5</span>
        </button>
        <span className="w-px h-full bg-[#555] mr-1" />
      </div>
    </footer>
  );
}

export default function App() {
  return (
    <div className="relative flex flex-col h-screen overflow-hidden bg-[#e6e6e6] text-[11px] leading-4 font-['Noto_Sans','Open_Sans',sans-serif]">
      <header className="relative bg-[#b7472a]">
        <HeaderArt />
        <TitleBar />
        <TabRow />
      </header>
      <Ribbon />
      <div className="flex flex-1 min-h-0">
        <ThumbnailPane />
        <Editor />
      </div>
      <StatusBar />
      <Taskbar />

      {/* watermark floats over the notes pane and taskbar */}
      <div className="absolute bottom-[14px] left-1/2 -translate-x-1/2 flex flex-col items-center pointer-events-none font-bold text-[#a8a8a8]/40">
        <span lang="ar" dir="rtl" className="text-[46px] leading-[50px] font-['DejaVu_Sans',sans-serif]">مستقل</span>
        <span className="text-[27px] leading-8 font-['Liberation_Sans',sans-serif]">mostaql.com</span>
      </div>
    </div>
  );
}
